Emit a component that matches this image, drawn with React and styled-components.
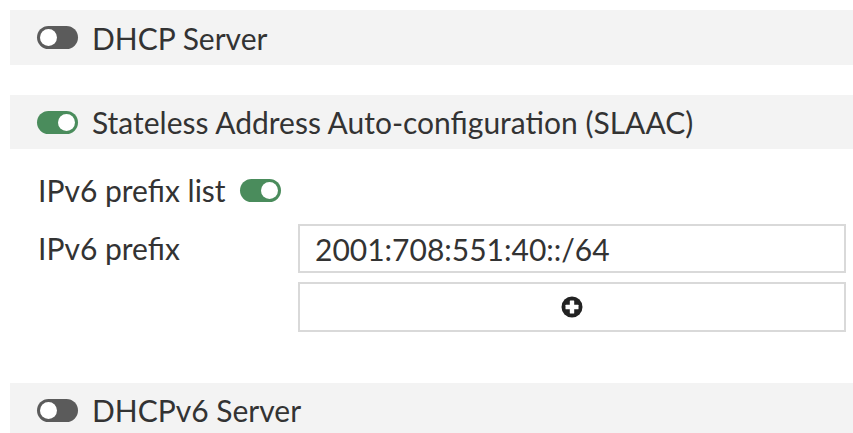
import React, { useState } from 'react';
import styled, { createGlobalStyle } from 'styled-components';

const GlobalStyle = createGlobalStyle`
  body {
    margin: 0;
    background: #ffffff;
    font-family: Lato, 'Open Sans', sans-serif;
    color: #333333;
  }
`;

const Page = styled.div`
  padding: 10px 0 0 10px;
`;

const SectionHeader = styled.div`
  display: flex;
  align-items: center;
  gap: 14px;
  height: ${({ tall }) => (tall ? 55 : 54)}px;
  padding-left: 27px;
  background: #f3f3f3;
  font-size: 30px;
`;

const Spacer = styled.div`
  height: 30px;
`;

const Track = styled.span`
  position: relative;
  display: inline-block;
  flex-shrink: 0;
  width: 41px;
  height: 23px;
  border-radius: 12px;
  background: ${({ on }) => (on ? '#4a8c5c' : '#5b5b5b')};
  cursor: pointer;

  &::after {
    content: '';
    position: absolute;
    top: 3px;
    left: ${({ on }) => (on ? '21px' : '3px')};
    width: 17px;
    height: 17px;
    border-radius: 50%;
    background: #ffffff;
  }
`;

const Toggle = ({ defaultOn }) => {
  const [on, setOn] = useState(defaultOn);
  return <Track on={on ? 1 : 0} onClick={() => setOn(!on)} />;
};

const Body = styled.div`
  padding: 21px 7px 51px 28px;
`;

const ListRow = styled.div`
  display: flex;
  align-items: center;
  gap: 14px;
  height: 40px;
  margin-bottom: 14px;
  font-size: 30px;
`;

const FieldGrid = styled.div`
  display: grid;
  grid-template-columns: 260px 1fr;
  row-gap: 9px;
  align-items: center;
  font-size: 30px;
`;

const Label = styled.div`
  align-self: start;
  line-height: 49px;
`;

const PrefixInput = styled.input`
  box-sizing: border-box;
  height: 49px;
  width: 100%;
  padding: 0 15px;
  border: 2px solid #d9d9d9;
  font-family: Lato, 'Open Sans', sans-serif;
  font-size: 30px;
  color: #333333;
  outline: none;
`;

const AddButton = styled.button`
  grid-column: 2;
  display: flex;
  align-items: center;
  justify-content: center;
  box-sizing: border-box;
  height: 50px;
  width: 100%;
  background: #ffffff;
  border: 2px solid #d9d9d9;
  cursor: pointer;
`;

const PlusIcon = () => (
  <svg width="22" height="22" viewBox="0 0 22 22">
    <circle cx="11" cy="11" r="10.5" fill="#222222" />
    <rect x="8.8" y="4.5" width="4.4" height="13" rx="0.5" fill="#ffffff" />
    <rect x="4.5" y="8.8" width="13" height="4.4" rx="0.5" fill="#ffffff" />
  </svg>
);

const App = () => {
  const [prefix, setPrefix] = useState('2001:708:551:40::/64');

  return (
    <Page>
      <GlobalStyle />
      <SectionHeader tall>
        <Toggle defaultOn={false} />
        DHCP Server
      </SectionHeader>
      <Spacer />
      <SectionHeader>
        <Toggle defaultOn />
        Stateless Address Auto-configuration (SLAAC)
      </SectionHeader>
      <Body>
        <ListRow>
          IPv6 prefix list
          <Toggle defaultOn />
        </ListRow>
        <FieldGrid>
          <Label>IPv6 prefix</Label>
          <PrefixInput value={prefix} onChange={(e) => setPrefix(e.target.value)} />
          <AddButton>
            <PlusIcon />
          </AddButton>
        </FieldGrid>
      </Body>
      <SectionHeader>
        <Toggle defaultOn={false} />
        DHCPv6 Server
      </SectionHeader>
    </Page>
  );
};

export default App;
